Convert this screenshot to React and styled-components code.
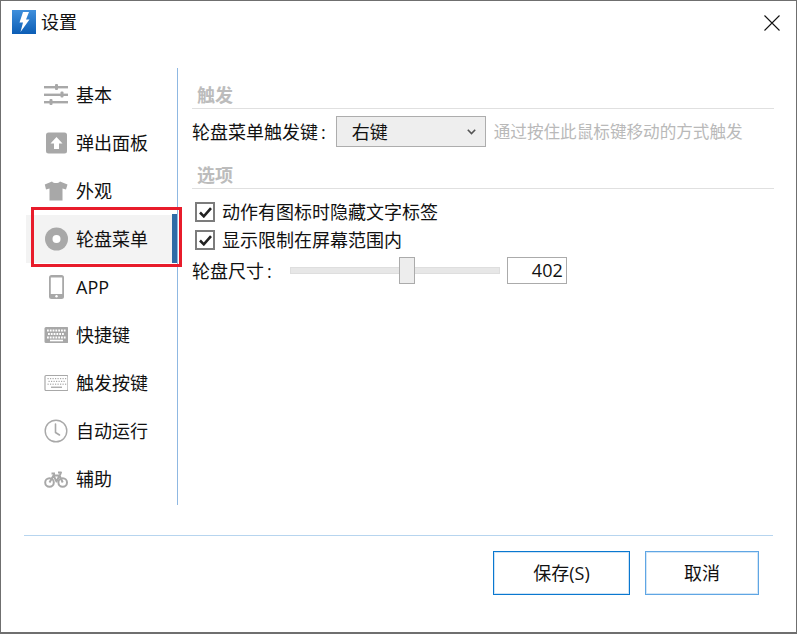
import React from "react";
import styled, { createGlobalStyle } from "styled-components";

const Global = createGlobalStyle`
  html, body {
    margin: 0;
    padding: 0;
    background: #6f6f6f;
    overflow: hidden;
  }
  * { box-sizing: border-box; }
`;

const Win = styled.div`
  width: 795px;
  height: 631px;
  margin: 1px 1px 2px 1px;
  background: #fff;
  color: #111;
  display: flex;
  flex-direction: column;
  font-family: "Open Sans", "Noto Sans CJK SC", sans-serif;
  font-size: 18px;
  line-height: 24px;
`;

const TitleBar = styled.div`
  height: 67px;
  padding: 9px 16px 0 11px;
  display: flex;
  align-items: flex-start;
`;

const AppIcon = styled.svg`
  width: 24px;
  height: 24px;
  flex: none;
`;

const Title = styled.span`
  margin-left: 5px;
  flex: 1;
`;

const CloseIcon = styled.svg`
  width: 16px;
  height: 16px;
  margin-top: 5px;
  flex: none;
`;

const Body = styled.div`
  display: flex;
  height: 437px;
`;

const Nav = styled.div`
  width: 152px;
  margin-left: 25px;
  padding-top: 3px;
  border-right: 1px solid #8fb8e2;
  flex: none;
`;

const NavItem = styled.div`
  position: relative;
  height: 48px;
  padding-left: 18px;
  display: flex;
  align-items: center;
  gap: 8px;
  background: ${(p) => (p.$active ? "#f3f3f3" : "transparent")};
  ${(p) =>
    p.$active &&
    `
    &::before {
      content: "";
      position: absolute;
      right: 0;
      top: -1px;
      bottom: 0;
      width: 5px;
      background: #2f6ba6;
    }
    &::after {
      content: "";
      position: absolute;
      left: 5px;
      right: -5px;
      top: -8px;
      bottom: -4px;
      border: 3px solid #e81c2b;
      pointer-events: none;
    }
  `}
`;

const NavGlyph = styled.svg`
  width: 24px;
  height: 24px;
  flex: none;
  color: #a8a8a8;
`;

const Pane = styled.div`
  flex: 1;
  padding: 14px 22px 0 14px;
`;

const SectionHead = styled.div`
  height: 27px;
  padding: 1px 0 0 5px;
  border-bottom: 1px solid #e0e0e0;
  color: #bcbcbc;
  font-weight: 700;
  margin-top: ${(p) => p.$top || 0}px;
`;

const Row = styled.div`
  display: flex;
  align-items: center;
  margin-top: ${(p) => p.$top}px;
`;

const Colon = styled.span`
  margin-left: 3px;
`;

const SelectBox = styled.div`
  width: 150px;
  height: 31px;
  margin-left: 10px;
  padding: 0 9px 0 15px;
  display: flex;
  align-items: center;
  justify-content: space-between;
  background: #eeeeee;
  border: 1px solid #adadad;
`;

const Chevron = styled.svg`
  width: 9px;
  height: 6px;
`;

const Hint = styled.span`
  margin-left: 8px;
  color: #b9b9b9;
  font-size: 16.6px;
  white-space: nowrap;
`;

const CheckRow = styled(Row)`
  padding-left: 3px;
  gap: 7px;
  height: 20px;
`;

const CheckBox = styled.span`
  width: 20px;
  height: 20px;
  border: 2px solid #7c7c7c;
  background: #fff;
  display: flex;
  align-items: center;
  justify-content: center;
  flex: none;
`;

const CheckMark = styled.svg`
  width: 13px;
  height: 11px;
`;

const Track = styled.div`
  position: relative;
  width: 210px;
  height: 7px;
  margin-left: 18px;
  background: #e7e7e7;
  border: 1px solid #dedede;
`;

const Thumb = styled.div`
  position: absolute;
  top: -11px;
  width: 16px;
  height: 27px;
  background: #ededed;
  border: 1px solid #ababab;
`;

const SizeInput = styled.div`
  width: 60px;
  height: 27px;
  margin-left: 7px;
  padding-right: 3px;
  border: 1px solid #ababab;
  text-align: right;
  line-height: 25px;
`;

const Footer = styled.div`
  margin: 30px 23px 0 23px;
  border-top: 1px solid #b7d5ef;
  padding: 15px 14px 0 0;
  display: flex;
  justify-content: flex-end;
  gap: 15px;
`;

const Btn = styled.div`
  width: ${(p) => p.$w}px;
  height: 44px;
  display: flex;
  align-items: center;
  justify-content: center;
  border: 1px solid ${(p) => (p.$primary ? "#0a78d0" : "#5fa6e4")};
  box-shadow: inset 0 0 0 1px ${(p) => (p.$primary ? "#cfe3f5" : "#d3e6f7")};
`;

const Sliders = () => (
  <NavGlyph viewBox="0 0 24 24" fill="currentColor">
    <rect x="0" y="3" width="24" height="2.4" />
    <rect x="0" y="10.6" width="24" height="2.4" />
    <rect x="0" y="18" width="24" height="2.4" />
    <rect x="11" y="1" width="3" height="6" rx="1" />
    <rect x="16.5" y="8.6" width="3" height="6" rx="1" />
    <rect x="5.5" y="16" width="3" height="6" rx="1" />
  </NavGlyph>
);

const UpBox = () => (
  <NavGlyph viewBox="0 0 24 24">
    <rect x="2" y="1.5" width="21" height="21" rx="2.5" fill="currentColor" />
    <path d="M12.5 6 L18.5 12.5 H15 V18 H10 V12.5 H6.5 Z" fill="#fff" />
  </NavGlyph>
);

const Shirt = () => (
  <NavGlyph viewBox="0 0 24 24" fill="currentColor">
    <path d="M8 2.5 C9.5 4.5 14.5 4.5 16 2.5 L23.5 5.5 L22 10.5 L18.5 9.5 V21.5 H5.5 V9.5 L2 10.5 L0.8 5.5 Z" />
  </NavGlyph>
);

const Disc = () => (
  <NavGlyph viewBox="0 0 24 24">
    <circle cx="12.5" cy="12" r="11.5" fill="currentColor" />
    <circle cx="12.5" cy="12" r="4" fill="#fff" />
  </NavGlyph>
);

const Phone = () => (
  <NavGlyph viewBox="0 0 24 24">
    <rect x="5" y="0" width="15" height="24" rx="2.5" fill="currentColor" />
    <rect x="6.8" y="2.5" width="11.4" height="16.5" fill="#fff" />
    <circle cx="12.5" cy="21.3" r="1.2" fill="#fff" />
  </NavGlyph>
);

const keyDots = (y, from, count, step, w, h, fill) =>
  Array.from({ length: count }, (_, i) => (
    <rect key={`${y}-${i}`} x={from + i * step} y={y} width={w} height={h} fill={fill} />
  ));

const KeyboardSolid = () => (
  <NavGlyph viewBox="0 0 24 24">
    <rect x="0.5" y="4" width="24" height="16" rx="1.5" fill="currentColor" />
    {keyDots(6.5, 3, 7, 2.8, 1.8, 2, "#fff")}
    {keyDots(10, 4, 6, 2.8, 1.8, 2, "#fff")}
    {keyDots(13.5, 3, 7, 2.8, 1.8, 2, "#fff")}
    <rect x="6" y="16.7" width="13" height="1.6" fill="#fff" />
  </NavGlyph>
);

const KeyboardOutline = () => (
  <NavGlyph viewBox="0 0 24 24">
    <rect x="1" y="4.5" width="23" height="15" rx="1" fill="#fff" stroke="currentColor" strokeWidth="1.2" />
    {keyDots(7, 3.5, 8, 2.5, 1.2, 1.2, "currentColor")}
    {keyDots(9.8, 4.5, 7, 2.5, 1.2, 1.2, "currentColor")}
    {keyDots(12.6, 3.5, 8, 2.5, 1.2, 1.2, "currentColor")}
    <rect x="7" y="15.6" width="11" height="1.3" fill="currentColor" />
  </NavGlyph>
);

const Clock = () => (
  <NavGlyph viewBox="0 0 24 24" fill="none" stroke="currentColor" strokeWidth="1.4">
    <circle cx="12" cy="12" r="10.8" />
    <path d="M11.5 5 V13.5 L15.5 16" strokeLinecap="round" strokeLinejoin="round" strokeWidth="1.6" />
  </NavGlyph>
);

const Bike = () => (
  <NavGlyph viewBox="0 0 24 24" fill="none" stroke="currentColor" strokeWidth="2">
    <circle cx="5.5" cy="15.5" r="4.3" />
    <circle cx="18.7" cy="15.5" r="4.3" />
    <path d="M5.5 15.5 L9.5 8.5 H15.5 L18.7 15.5 M9.5 8.5 L12.5 14.5 L15.5 8.5 M7.5 6.5 H11 M14 5.5 H17 L16 8" strokeLinejoin="round" />
  </NavGlyph>
);

const navItems = [
  { icon: Sliders, label: "基本" },
  { icon: UpBox, label: "弹出面板" },
  { icon: Shirt, label: "外观" },
  { icon: Disc, label: "轮盘菜单", active: true },
  { icon: Phone, label: "APP" },
  { icon: KeyboardSolid, label: "快捷键" },
  { icon: KeyboardOutline, label: "触发按键" },
  { icon: Clock, label: "自动运行" },
  { icon: Bike, label: "辅助" },
];

const Check = () => (
  <CheckBox>
    <CheckMark viewBox="0 0 13 11" fill="none" stroke="#222" strokeWidth="2.6">
      <path d="M1 5.5 L4.8 9.3 L12 1.2" />
    </CheckMark>
  </CheckBox>
);

export default function App() {
  return (
    <>
      <Global />
      <Win>
        <TitleBar>
          <AppIcon viewBox="0 0 24 24">
            <defs>
              <linearGradient id="boltBg" x1="0" y1="0" x2="0" y2="1">
                <stop offset="0" stopColor="#3f8fdc" />
                <stop offset="1" stopColor="#0b5db5" />
              </linearGradient>
            </defs>
            <rect width="24" height="24" fill="url(#boltBg)" />
            <path d="M11 2 H17 L14 9.5 H17.5 L8.5 22 L11 12.5 H7.5 Z" fill="#fff" />
          </AppIcon>
          <Title>设置</Title>
          <CloseIcon viewBox="0 0 16 16" fill="none" stroke="#111" strokeWidth="1.1">
            <path d="M0.5 0.5 L15.5 15.5 M15.5 0.5 L0.5 15.5" />
          </CloseIcon>
        </TitleBar>
        <Body>
          <Nav>
            {navItems.map(({ icon: Icon, label, active }) => (
              <NavItem key={label} $active={active}>
                <Icon />
                <span>{label}</span>
              </NavItem>
            ))}
          </Nav>
          <Pane>
            <SectionHead>触发</SectionHead>
            <Row $top={7}>
              <span>轮盘菜单触发键</span>
              <Colon>:</Colon>
              <SelectBox>
                <span>右键</span>
                <Chevron viewBox="0 0 9 6" fill="none" stroke="#555" strokeWidth="1.6">
                  <path d="M0.8 0.8 L4.5 4.6 L8.2 0.8" />
                </Chevron>
              </SelectBox>
              <Hint>通过按住此鼠标键移动的方式触发</Hint>
            </Row>
            <SectionHead $top={15}>选项</SectionHead>
            <CheckRow $top={13}>
              <Check />
              <span>动作有图标时隐藏文字标签</span>
            </CheckRow>
            <CheckRow $top={8}>
              <Check />
              <span>显示限制在屏幕范围内</span>
            </CheckRow>
            <Row $top={7}>
              <span>轮盘尺寸</span>
              <Colon>:</Colon>
              <Track>
                <Thumb style={{ left: 108 }} />
              </Track>
              <SizeInput>402</SizeInput>
            </Row>
          </Pane>
        </Body>
        <Footer>
          <Btn $primary $w={137}>保存(S)</Btn>
          <Btn $w={114}>取消</Btn>
        </Footer>
      </Win>
    </>
  );
}
